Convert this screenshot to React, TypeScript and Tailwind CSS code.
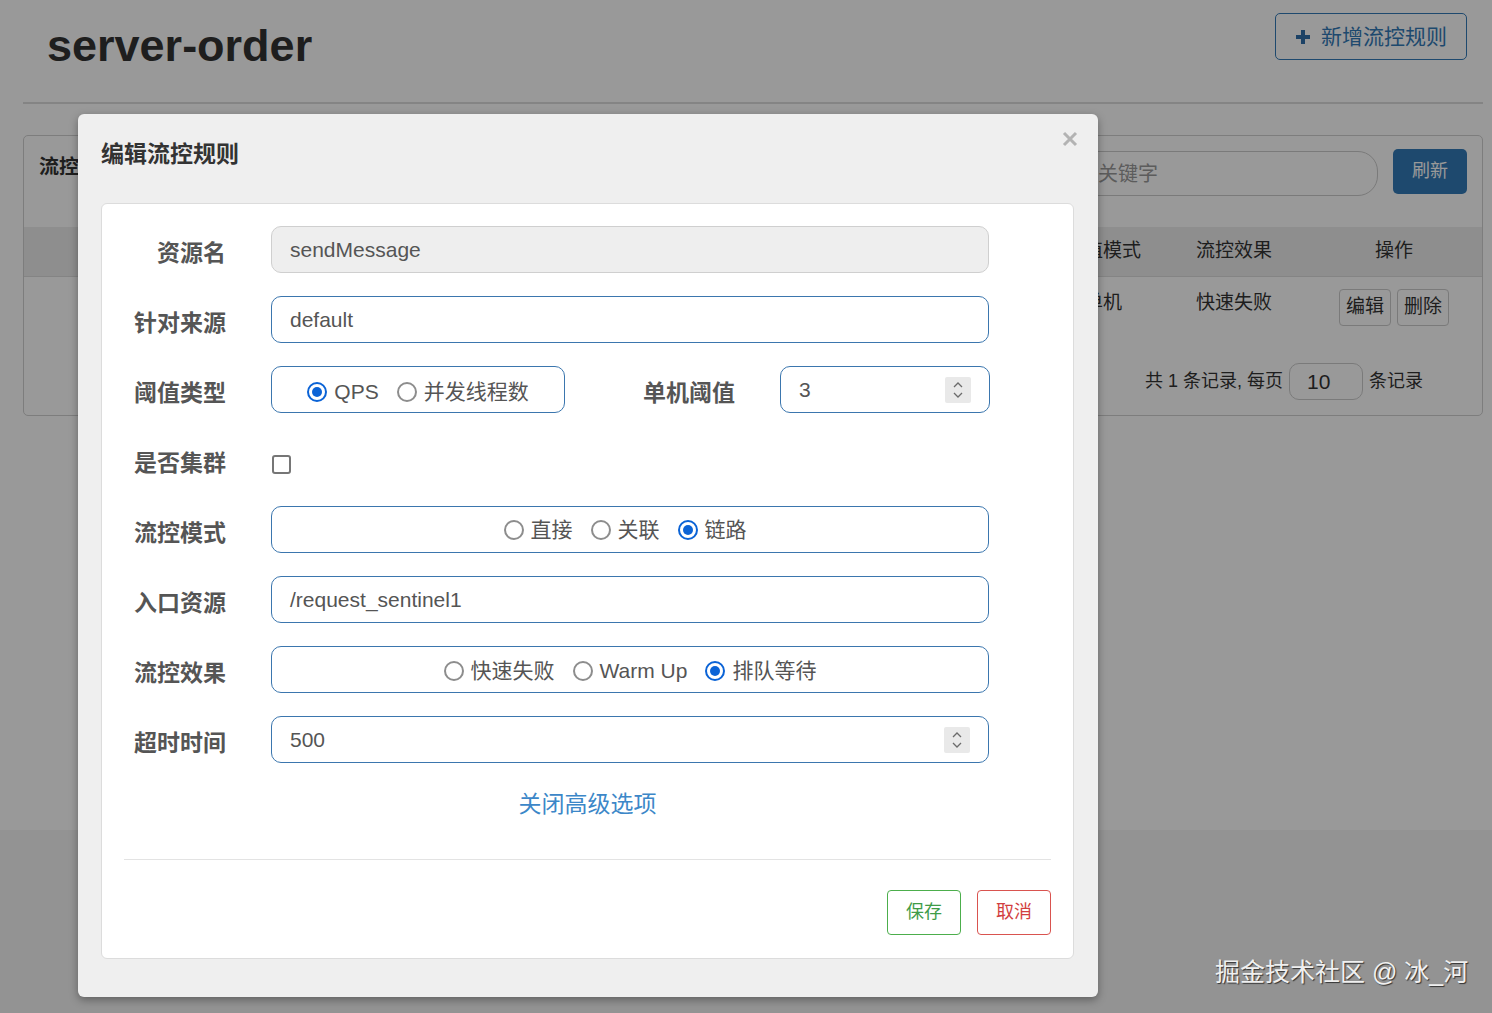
import React from "react";

function Radio({ checked, label }: { checked?: boolean; label: string }) {
  return (
    <span className="flex items-center gap-[7px]">
      {checked ? (
        <span className="w-[20px] h-[20px] rounded-full border-2 border-[#0b63d6] flex items-center justify-center bg-white">
          <span className="w-[10px] h-[10px] rounded-full bg-[#0b63d6]" />
        </span>
      ) : (
        <span className="w-[20px] h-[20px] rounded-full border-2 border-[#8d8d8d] bg-white" />
      )}
      <span>{label}</span>
    </span>
  );
}

function Spinner() {
  return (
    <span className="flex flex-col items-center justify-center w-[26px] h-[26px] bg-[#e9e9e9] rounded-[2px] gap-[4px]">
      <svg width="10" height="6" viewBox="0 0 10 6">
        <path d="M1 5 L5 1 L9 5" fill="none" stroke="#6b6b6b" strokeWidth="1.3" />
      </svg>
      <svg width="10" height="6" viewBox="0 0 10 6">
        <path d="M1 1 L5 5 L9 1" fill="none" stroke="#6b6b6b" strokeWidth="1.3" />
      </svg>
    </span>
  );
}

function Label({ children, w = "w-[124px]" }: { children: React.ReactNode; w?: string }) {
  return (
    <div className={`${w} shrink-0 pt-[8px] text-right text-[23px] font-bold text-[#555] leading-none`}>{children}</div>
  );
}

const inputBox =
  "h-[47px] border border-[#3b76ae] rounded-[10px] bg-white flex items-center text-[21px] text-[#555]";

export default function App() {
  return (
    <div className="relative w-full h-[1013px] overflow-hidden bg-[#f5f5f5] [font-family:'Liberation_Sans','Noto_Sans_CJK_SC',Arial,sans-serif]">
      {/* Background page */}
      <div className="h-[830px] bg-white pl-[23px] pr-[9px]">
        <div className="flex items-start justify-between h-[102px]">
          <h1 className="mt-[20px] ml-[24px] text-[45px] font-bold leading-[52px] text-[#333]">server-order</h1>
          <button className="mt-[13px] mr-[16px] h-[47px] w-[192px] border border-[#337ab7] rounded-[5px] flex items-center justify-center gap-[10px] text-[21px] text-[#337ab7]">
            <svg width="16" height="16" viewBox="0 0 16 16">
              <path d="M8 1 V15 M1 8 H15" stroke="#2f6eaa" strokeWidth="4" />
            </svg>
            <span>新增流控规则</span>
          </button>
        </div>
        <div className="h-[2px] bg-[#dcdcdc]" />
        <div className="mt-[31px] border border-[#d0d0d0] rounded-[5px] h-[281px]">
          <div className="flex items-start justify-between h-[91px] px-[15px]">
            <div className="mt-[16px] text-[20px] font-bold text-[#333]">流控</div>
            <div className="flex items-start gap-[15px] mt-[13px]">
              <div className="mt-[2px] w-[353px] h-[45px] border border-[#ccc] rounded-[20px] flex items-center pl-[12px] text-[20px] text-[#999]">
                请输入关键字
              </div>
              <button className="w-[74px] h-[45px] rounded-[5px] bg-[#337ab7] text-white text-[18px]">刷新</button>
            </div>
          </div>
          <div className="grid grid-cols-[260px_190px_190px_190px_184px_130px_132px_1fr] h-[50px] bg-[#ededed] border-b border-[#ddd] items-center text-[19px] text-[#333] text-center">
            <div />
            <div />
            <div />
            <div />
            <div />
            <div>阈值模式</div>
            <div>流控效果</div>
            <div className="pl-[6px]">操作</div>
          </div>
          <div className="grid grid-cols-[260px_190px_190px_190px_184px_130px_132px_1fr] h-[62px] items-start text-[19px] text-[#333] text-center">
            <div />
            <div />
            <div />
            <div />
            <div />
            <div className="mt-[12px]">单机</div>
            <div className="mt-[12px]">快速失败</div>
            <div className="flex justify-center gap-[6px] mt-[12px] pl-[6px]">
              <span className="w-[52px] h-[37px] border border-[#ccc] rounded-[4px] bg-white flex items-center justify-center text-[19px]">编辑</span>
              <span className="w-[52px] h-[37px] border border-[#ccc] rounded-[4px] bg-white flex items-center justify-center text-[19px]">删除</span>
            </div>
          </div>
          <div className="flex items-center justify-end pr-[59px] mt-[24px] text-[18px] text-[#333] gap-[6px]">
            <span>共 1 条记录, 每页</span>
            <span className="w-[74px] h-[37px] border border-[#ccc] rounded-[10px] flex items-center pl-[17px] text-[21px]">10</span>
            <span>条记录</span>
          </div>
        </div>
      </div>

      {/* Backdrop */}
      <div className="absolute inset-0 bg-black/40" />

      {/* Modal */}
      <div className="absolute left-[78px] top-[114px] w-[1020px] h-[883px] bg-[#efefef] rounded-[6px] shadow-[0_3px_9px_rgba(0,0,0,0.35)] pl-[23px] pr-[24px] pt-[25px]">
        <div className="text-[23px] font-bold leading-[30px] text-[#333]">编辑流控规则</div>
        <button className="absolute right-[20px] top-[17px] w-[16px] h-[16px]">
          <svg width="16" height="16" viewBox="0 0 16 16">
            <path d="M2 2 L14 14 M14 2 L2 14" stroke="#b3b3b3" strokeWidth="3" />
          </svg>
        </button>

        <div className="mt-[34px] bg-white border border-[#dcdcdc] rounded-[6px] pt-[22px] pb-[23px]">
          <div className="flex flex-col gap-[23px]">
            <div className="flex items-center h-[47px]">
              <Label>资源名</Label>
              <div className="ml-[45px] w-[718px] h-[47px] border border-[#cfcfcf] rounded-[10px] bg-[#eeeeee] flex items-center pl-[18px] text-[21px] text-[#555]">
                sendMessage
              </div>
            </div>
            <div className="flex items-center h-[47px]">
              <Label>针对来源</Label>
              <div className={`ml-[45px] w-[718px] pl-[18px] ${inputBox}`}>default</div>
            </div>
            <div className="flex items-center h-[47px]">
              <Label>阈值类型</Label>
              <div className={`ml-[45px] w-[294px] justify-center gap-[18px] pt-[4px] ${inputBox}`}>
                <Radio checked label="QPS" />
                <Radio label="并发线程数" />
              </div>
              <Label w="w-[170px]">单机阈值</Label>
              <div className={`ml-[45px] w-[210px] pl-[18px] pr-[18px] justify-between ${inputBox}`}>
                <span>3</span>
                <Spinner />
              </div>
            </div>
            <div className="flex items-center h-[47px]">
              <Label>是否集群</Label>
              <div className="ml-[46px] mt-[9px] w-[19px] h-[19px] border-2 border-[#767676] rounded-[3px] bg-white" />
            </div>
            <div className="flex items-center h-[47px]">
              <Label>流控模式</Label>
              <div className={`ml-[45px] w-[718px] justify-center gap-[18px] pr-[10px] ${inputBox}`}>
                <Radio label="直接" />
                <Radio label="关联" />
                <Radio checked label="链路" />
              </div>
            </div>
            <div className="flex items-center h-[47px]">
              <Label>入口资源</Label>
              <div className={`ml-[45px] w-[718px] pl-[18px] ${inputBox}`}>/request_sentinel1</div>
            </div>
            <div className="flex items-center h-[47px]">
              <Label>流控效果</Label>
              <div className={`ml-[45px] w-[718px] justify-center gap-[18px] pt-[2px] ${inputBox}`}>
                <Radio label="快速失败" />
                <Radio label="Warm Up" />
                <Radio checked label="排队等待" />
              </div>
            </div>
            <div className="flex items-center h-[47px]">
              <Label>超时时间</Label>
              <div className={`ml-[45px] w-[718px] pl-[18px] pr-[18px] justify-between ${inputBox}`}>
                <span>500</span>
                <Spinner />
              </div>
            </div>
          </div>

          <div className="mt-[27px] h-[28px] leading-[28px] text-center text-[23px] text-[#3c87c8]">关闭高级选项</div>

          <div className="mt-[41px] mx-[22px] h-[1px] bg-[#e3e3e3]" />

          <div className="mt-[30px] flex justify-end gap-[16px] pr-[22px]">
            <button className="w-[74px] h-[45px] border border-[#4cae4c] rounded-[4px] bg-white text-[18px] text-[#3f9c48]">保存</button>
            <button className="w-[74px] h-[45px] border border-[#d9534f] rounded-[4px] bg-white text-[18px] text-[#d23f3f]">取消</button>
          </div>
        </div>
      </div>

      {/* Watermark */}
      <div className="absolute left-[1215px] top-[955px] text-[25px] leading-[34px] text-[#f0f0f0] [text-shadow:1px_1px_1px_#333] whitespace-nowrap">
        掘金技术社区 @ 冰_河
      </div>
    </div>
  );
}
